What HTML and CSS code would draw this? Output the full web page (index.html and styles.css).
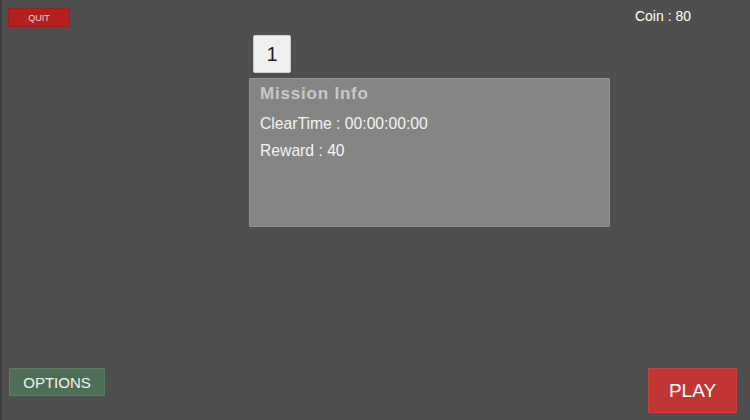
FILE: index.html
```html
<!DOCTYPE html>
<html lang="en">
<head>
  <meta charset="UTF-8">
  <meta name="viewport" content="width=device-width, initial-scale=1.0">
  <title>Mission Select</title>
  <link rel="stylesheet" href="styles.css">
</head>
<body>
  <div class="screen">
    <div class="top-bar">
      <button class="quit">QUIT</button>
      <span class="coin">Coin : 80</span>
    </div>

    <div class="mission">
      <div class="tab">1</div>
      <div class="panel">
        <h2 class="panel-title">Mission Info</h2>
        <p class="panel-line">ClearTime : 00:00:00:00</p>
        <p class="panel-line">Reward : 40</p>
      </div>
    </div>

    <div class="bottom-bar">
      <button class="options">OPTIONS</button>
      <button class="play">PLAY</button>
    </div>
  </div>
</body>
</html>
```

FILE: styles.css
```css
/* Base */
body {
  margin: 0;
  font-family: 'Liberation Sans', Arial, sans-serif;
  background: #4f4f4f;
  color: #ffffff;
}

.screen {
  height: 420px;
  box-sizing: border-box;
  border-left: 2px solid #3d3d3d;
  display: flex;
  flex-direction: column;
}

button {
  font-family: inherit;
  border: none;
  border-radius: 1px;
  cursor: pointer;
  padding: 0;
}

/* Top bar */
.top-bar {
  display: flex;
  justify-content: space-between;
  align-items: flex-start;
  padding: 8px 59px 0 6px;
}

.quit {
  width: 62px;
  height: 19px;
  background: #b61f1f;
  border: 1px solid #a51b1b;
  color: #f3d6d6;
  font-size: 9px;
}

.coin {
  font-size: 14px;
  line-height: 16px;
}

/* Mission */
.mission {
  margin: 8px 0 0 247px;
  display: flex;
  flex-direction: column;
  align-items: flex-start;
  gap: 5px;
}

.tab {
  margin-left: 4px;
  width: 36px;
  height: 36px;
  background: #efefef;
  border: 1px solid #d0d0d0;
  border-radius: 2px;
  color: #1e1e1e;
  font-size: 20px;
  display: flex;
  align-items: center;
  justify-content: center;
}

.panel {
  width: 339px;
  height: 137px;
  background: #858585;
  border: 1px solid #929292;
  border-radius: 1px;
  padding: 5px 10px;
}

.panel-title {
  margin: 0 0 11px;
  font-size: 17px;
  font-weight: bold;
  letter-spacing: 0.8px;
  color: #c9c9c9;
  line-height: 20px;
}

.panel-line {
  margin: 0 0 9px;
  font-size: 15.7px;
  line-height: 18px;
  color: #f4f4f4;
}

/* Bottom bar */
.bottom-bar {
  margin-top: auto;
  display: flex;
  justify-content: space-between;
  align-items: flex-start;
  padding: 0 13px 7px 7px;
}

.options {
  width: 96px;
  height: 28px;
  background: #4e6e56;
  border: 1px solid #5c7c63;
  color: #f2f2f2;
  font-size: 15px;
}

.play {
  width: 89px;
  height: 45px;
  background: #c13535;
  border: 1px solid #cc4040;
  color: #ffffff;
  font-size: 19px;
}
```
